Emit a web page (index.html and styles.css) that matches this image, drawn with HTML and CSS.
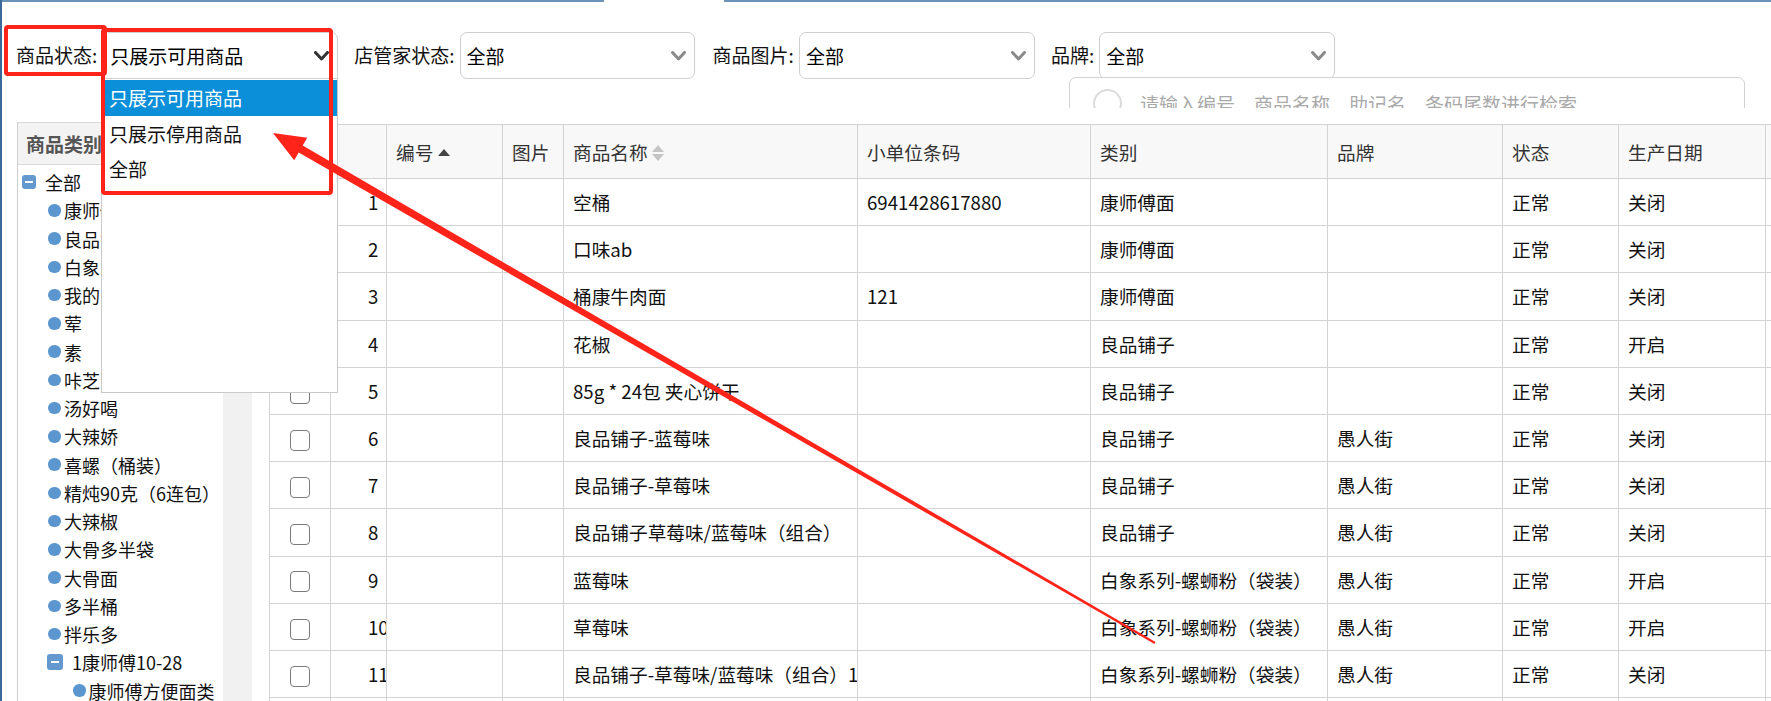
FILE: index.html
```html
<!DOCTYPE html>
<html lang="zh-CN">
<head>
<meta charset="utf-8">
<title>商品列表</title>
<link rel="stylesheet" href="styles.css">
</head>
<body>
<div class="page">
  <div class="topline"><span class="seg seg-a"></span><span class="seg-gap"></span><span class="seg seg-b"></span></div>

  <div class="filters">
    <div class="field">
      <span class="flabel">商品状态:</span>
      <div class="select is-open"><span class="sval">只展示可用商品</span><svg class="chev" viewBox="0 0 15 10" width="15" height="10"><polyline points="1.5,1.5 7.5,8 13.5,1.5"/></svg></div>
    </div>
    <div class="field">
      <span class="flabel">店管家状态:</span>
      <div class="select"><span class="sval">全部</span><svg class="chev" viewBox="0 0 15 10" width="15" height="10"><polyline points="1.5,1.5 7.5,8 13.5,1.5"/></svg></div>
    </div>
    <div class="field">
      <span class="flabel">商品图片:</span>
      <div class="select"><span class="sval">全部</span><svg class="chev" viewBox="0 0 15 10" width="15" height="10"><polyline points="1.5,1.5 7.5,8 13.5,1.5"/></svg></div>
    </div>
    <div class="field">
      <span class="flabel">品牌:</span>
      <div class="select"><span class="sval">全部</span><svg class="chev" viewBox="0 0 15 10" width="15" height="10"><polyline points="1.5,1.5 7.5,8 13.5,1.5"/></svg></div>
    </div>
  </div>

  <div class="search-row">
    <div class="search">
      <span class="search-ico"></span>
      <span class="search-ph">请输入编号、商品名称、助记名、条码尾数进行检索</span>
    </div>
  </div>

  <div class="main">
    <aside class="tree-panel">
      <div class="tree-head">商品类别</div>
      <div class="tree-body">
        <ul class="tree">
          <li class="lv0"><span class="minus"></span><span class="tx">全部</span></li>
          <li class="lv1"><span class="dot"></span><span class="tx">康师傅面</span></li>
          <li class="lv1"><span class="dot"></span><span class="tx">良品铺子</span></li>
          <li class="lv1"><span class="dot"></span><span class="tx">白象系列-螺蛳粉（袋装）</span></li>
          <li class="lv1"><span class="dot"></span><span class="tx">我的分类</span></li>
          <li class="lv1"><span class="dot"></span><span class="tx">荤</span></li>
          <li class="lv1"><span class="dot"></span><span class="tx">素</span></li>
          <li class="lv1"><span class="dot"></span><span class="tx">咔芝士</span></li>
          <li class="lv1"><span class="dot"></span><span class="tx">汤好喝</span></li>
          <li class="lv1"><span class="dot"></span><span class="tx">大辣娇</span></li>
          <li class="lv1"><span class="dot"></span><span class="tx">喜螺（桶装）</span></li>
          <li class="lv1"><span class="dot"></span><span class="tx">精炖90克（6连包）</span></li>
          <li class="lv1"><span class="dot"></span><span class="tx">大辣椒</span></li>
          <li class="lv1"><span class="dot"></span><span class="tx">大骨多半袋</span></li>
          <li class="lv1"><span class="dot"></span><span class="tx">大骨面</span></li>
          <li class="lv1"><span class="dot"></span><span class="tx">多半桶</span></li>
          <li class="lv1"><span class="dot"></span><span class="tx">拌乐多</span></li>
          <li class="lv1b"><span class="minus big"></span><span class="tx">1康师傅10-28</span></li>
          <li class="lv2"><span class="dot"></span><span class="tx">康师傅方便面类</span></li>
        </ul>
        <div class="scroll-track"></div>
      </div>
    </aside>

    <div class="grid-wrap">
      <table class="grid">
        <colgroup>
          <col class="c-chk"><col class="c-no"><col class="c-code"><col class="c-pic"><col class="c-name"><col class="c-bar"><col class="c-cat"><col class="c-brand"><col class="c-stat"><col class="c-date"><col class="c-more">
        </colgroup>
        <thead>
          <tr>
            <th></th><th></th>
            <th>编号<span class="sort-up"></span></th>
            <th>图片</th>
            <th>商品名称<span class="sort-both"><i class="up"></i><i class="down"></i></span></th>
            <th>小单位条码</th>
            <th>类别</th>
            <th>品牌</th>
            <th>状态</th>
            <th>生产日期</th>
            <th></th>
          </tr>
        </thead>
        <tbody>
          <tr><td class="chk"><span class="box"></span></td><td class="no">1</td><td></td><td></td><td>空桶</td><td>6941428617880</td><td>康师傅面</td><td></td><td>正常</td><td>关闭</td><td></td></tr>
          <tr><td class="chk"><span class="box"></span></td><td class="no">2</td><td></td><td></td><td>口味ab</td><td></td><td>康师傅面</td><td></td><td>正常</td><td>关闭</td><td></td></tr>
          <tr><td class="chk"><span class="box"></span></td><td class="no">3</td><td></td><td></td><td>桶康牛肉面</td><td>121</td><td>康师傅面</td><td></td><td>正常</td><td>关闭</td><td></td></tr>
          <tr><td class="chk"><span class="box"></span></td><td class="no">4</td><td></td><td></td><td>花椒</td><td></td><td>良品铺子</td><td></td><td>正常</td><td>开启</td><td></td></tr>
          <tr><td class="chk"><span class="box"></span></td><td class="no">5</td><td></td><td></td><td>85g * 24包 夹心饼干</td><td></td><td>良品铺子</td><td></td><td>正常</td><td>关闭</td><td></td></tr>
          <tr><td class="chk"><span class="box"></span></td><td class="no">6</td><td></td><td></td><td>良品铺子-蓝莓味</td><td></td><td>良品铺子</td><td>愚人街</td><td>正常</td><td>关闭</td><td></td></tr>
          <tr><td class="chk"><span class="box"></span></td><td class="no">7</td><td></td><td></td><td>良品铺子-草莓味</td><td></td><td>良品铺子</td><td>愚人街</td><td>正常</td><td>关闭</td><td></td></tr>
          <tr><td class="chk"><span class="box"></span></td><td class="no">8</td><td></td><td></td><td>良品铺子草莓味/蓝莓味（组合）</td><td></td><td>良品铺子</td><td>愚人街</td><td>正常</td><td>关闭</td><td></td></tr>
          <tr><td class="chk"><span class="box"></span></td><td class="no">9</td><td></td><td></td><td>蓝莓味</td><td></td><td>白象系列-螺蛳粉（袋装）</td><td>愚人街</td><td>正常</td><td>开启</td><td></td></tr>
          <tr><td class="chk"><span class="box"></span></td><td class="no">10</td><td></td><td></td><td>草莓味</td><td></td><td>白象系列-螺蛳粉（袋装）</td><td>愚人街</td><td>正常</td><td>开启</td><td></td></tr>
          <tr><td class="chk"><span class="box"></span></td><td class="no">11</td><td></td><td></td><td>良品铺子-草莓味/蓝莓味（组合）1</td><td></td><td>白象系列-螺蛳粉（袋装）</td><td>愚人街</td><td>正常</td><td>关闭</td><td></td></tr>
          <tr><td class="chk"><span class="box"></span></td><td class="no">12</td><td></td><td></td><td>良品铺子</td><td></td><td>良品铺子</td><td></td><td>正常</td><td>关闭</td><td></td></tr>
        </tbody>
      </table>
    </div>
  </div>
</div>

<div class="dropdown">
  <div class="opt is-active">只展示可用商品</div>
  <div class="opt">只展示停用商品</div>
  <div class="opt">全部</div>
</div>

<div class="mark mark-label"></div>
<div class="mark mark-select"></div>

<svg class="arrow" width="1771" height="701" viewBox="0 0 1771 701">
  <polygon points="273,133 307.2,137.7 302.7,145.5 1155.5,642.1 1154.5,643.9 298.7,152.5 294.2,160.3"/>
</svg>
</body>
</html>
```

FILE: styles.css
```css
* { box-sizing: border-box; }

html, body {
  margin: 0;
  padding: 0;
  width: 1771px;
  height: 701px;
  overflow: hidden;
  background: #fff;
}

body {
  font-family: "Microsoft YaHei", "Noto Sans CJK SC", "Noto Sans", sans-serif;
  color: #111;
}

.page {
  height: 701px;
  border-left: 2px solid #3a6a9c;
  display: flex;
  flex-direction: column;
}

/* top tab line */
.topline {
  display: flex;
  height: 2px;
  flex: none;
}
.seg { background: #6a93b9; height: 2px; }
.seg-a { width: 602px; }
.seg-gap { width: 120px; }
.seg-b { flex: 1; }

/* filters */
.filters {
  display: flex;
  align-items: center;
  margin-top: 30px;
  padding-left: 14px;
  height: 47px;
  flex: none;
}
.field {
  display: flex;
  align-items: center;
  margin-right: 16px;
}
.field:nth-child(2) { margin-right: 18px; }
.flabel {
  font-size: 19px;
  line-height: 24px;
  color: #111;
  margin-right: 5px;
  margin-top: -2px;
  white-space: nowrap;
}
.field:first-child .flabel { margin-right: 6px; }
.select {
  width: 235px;
  height: 47px;
  border: 1px solid #cfcfcf;
  border-radius: 7px;
  display: flex;
  align-items: center;
  padding-left: 6px;
  padding-right: 8px;
  background: #fff;
}
.field:nth-child(3) .select,
.field:nth-child(4) .select { width: 236px; }
.sval {
  font-size: 19px;
  line-height: 24px;
  color: #000;
}
.chev {
  margin-left: auto;
  fill: none;
  stroke: #8a8a8a;
  stroke-width: 3;
  stroke-linecap: round;
  stroke-linejoin: round;
}
.is-open .chev { stroke: #333; }
.is-open { border-bottom-left-radius: 0; border-bottom-right-radius: 0; }

/* search */
.search-row {
  display: flex;
  justify-content: flex-end;
  padding-right: 26px;
  margin-top: -2px;
  height: 31px;
  overflow: hidden;
  flex: none;
}
.search {
  width: 676px;
  height: 52px;
  border: 1px solid #d2d2d2;
  border-radius: 7px;
  display: flex;
  align-items: flex-start;
  padding-left: 23px;
  padding-top: 11px;
  background: #fff;
}
.search-ico {
  width: 29px;
  height: 29px;
  border: 2px solid #dcdcdc;
  border-radius: 50%;
  flex: none;
}
.search-ph {
  font-size: 19px;
  line-height: 22px;
  color: #a9a9a9;
  margin-left: 18px;
  margin-top: 4px;
  white-space: nowrap;
}

/* main area */
.main {
  display: flex;
  margin-top: 14px;
  flex: 1;
  min-height: 0;
}

.tree-panel {
  width: 235px;
  margin-left: 15px;
  flex: none;
  display: flex;
  flex-direction: column;
  border-left: 1px solid #cfcfcf;
}
.tree-head {
  height: 43px;
  background: #f3f3f3;
  border-top: 1px solid #dadada;
  border-bottom: 1px solid #dadada;
  border-right: 1px solid #dadada;
  font-size: 19px;
  font-weight: bold;
  color: #555;
  display: flex;
  align-items: center;
  padding-left: 8px;
  flex: none;
}
.tree-body {
  flex: 1;
  display: flex;
  min-height: 0;
}
.tree {
  list-style: none;
  margin: 0;
  padding: 3px 0 0 0;
  width: 205px;
  overflow: hidden;
  flex: none;
}
.tree li {
  height: 28.25px;
  display: flex;
  align-items: center;
  white-space: nowrap;
  font-size: 18px;
  color: #111;
}
.tree .tx { line-height: 22px; }
.scroll-track {
  flex: 1;
  background: #f1f1f1;
}

.minus {
  width: 14px;
  height: 14px;
  border-radius: 3px;
  background: #6399cf;
  position: relative;
  flex: none;
}
.minus::after {
  content: "";
  position: absolute;
  left: 3px;
  right: 3px;
  top: 6px;
  height: 2px;
  background: #fff;
}
.minus.big { width: 16px; height: 16px; }
.minus.big::after { top: 7px; left: 4px; right: 4px; }

.dot {
  width: 12.5px;
  height: 12.5px;
  border-radius: 50%;
  background: #5b96cf;
  flex: none;
}

.lv0 .minus { margin-left: 4px; margin-right: 9px; }
.lv1 .dot { margin-left: 30px; margin-right: 3.5px; }
.lv1b .minus { margin-left: 29px; margin-right: 9px; }
.lv2 .dot { margin-left: 55px; margin-right: 3px; }

/* table */
.grid-wrap {
  flex: 1;
  margin-left: 17px;
  margin-top: 2px;
  overflow: hidden;
  min-width: 0;
}
.grid {
  border-collapse: collapse;
  table-layout: fixed;
  width: 1646px;
  font-size: 18.67px;
}
.c-chk { width: 61px; }
.c-no { width: 56px; }
.c-code { width: 116px; }
.c-pic { width: 61px; }
.c-name { width: 294px; }
.c-bar { width: 233px; }
.c-cat { width: 237px; }
.c-brand { width: 175px; }
.c-stat { width: 116px; }
.c-date { width: 147px; }
.c-more { width: 150px; }

.grid th,
.grid td {
  border: 1px solid #d3d3d3;
  padding: 0 0 0 9px;
  text-align: left;
  white-space: nowrap;
  overflow: hidden;
  text-overflow: clip;
  line-height: 24px;
}
.grid th {
  height: 54px;
  background: #f8f8f8;
  font-weight: normal;
  color: #333;
}
.grid td {
  height: 47.2px;
  color: #111;
}
.grid td.chk {
  padding: 0;
  text-align: center;
}
.box {
  display: inline-block;
  width: 20px;
  height: 21px;
  border: 1.5px solid #7b7b7b;
  border-radius: 4px;
  vertical-align: middle;
  background: #fff;
}
.grid td.no { padding-left: 37px; }

.sort-up {
  display: inline-block;
  width: 0;
  height: 0;
  border-left: 6px solid transparent;
  border-right: 6px solid transparent;
  border-bottom: 7px solid #444;
  margin-left: 5px;
  vertical-align: 4px;
}
.sort-both {
  display: inline-flex;
  flex-direction: column;
  gap: 2px;
  margin-left: 4px;
  vertical-align: middle;
  position: relative;
  top: -1px;
}
.sort-both i {
  display: block;
  width: 0;
  height: 0;
  border-left: 6px solid transparent;
  border-right: 6px solid transparent;
}
.sort-both .up { border-bottom: 7px solid #c4c4c4; }
.sort-both .down { border-top: 7px solid #c4c4c4; }

/* dropdown list (open select) */
.dropdown {
  position: absolute;
  left: 101px;
  top: 79px;
  width: 237px;
  height: 314px;
  background: #fff;
  border: 1px solid #c9c9c9;
  border-top: none;
  padding-top: 1px;
  font-size: 19px;
  z-index: 5;
}
.opt {
  height: 35px;
  line-height: 35px;
  padding-left: 7px;
  color: #111;
  white-space: nowrap;
}
.opt.is-active {
  background: #0b8fd9;
  color: #fff;
  height: 36px;
  line-height: 36px;
}

/* annotation marks */
.mark {
  position: absolute;
  border: 4px solid #ff2419;
  border-radius: 4px;
  z-index: 6;
  pointer-events: none;
}
.mark-label { left: 4px; top: 25px; width: 103px; height: 51px; }
.mark-select { left: 101px; top: 28px; width: 232px; height: 167px; }

.arrow {
  position: absolute;
  left: 0;
  top: 0;
  z-index: 7;
  pointer-events: none;
}
.arrow polygon { fill: #ff2419; }
```
